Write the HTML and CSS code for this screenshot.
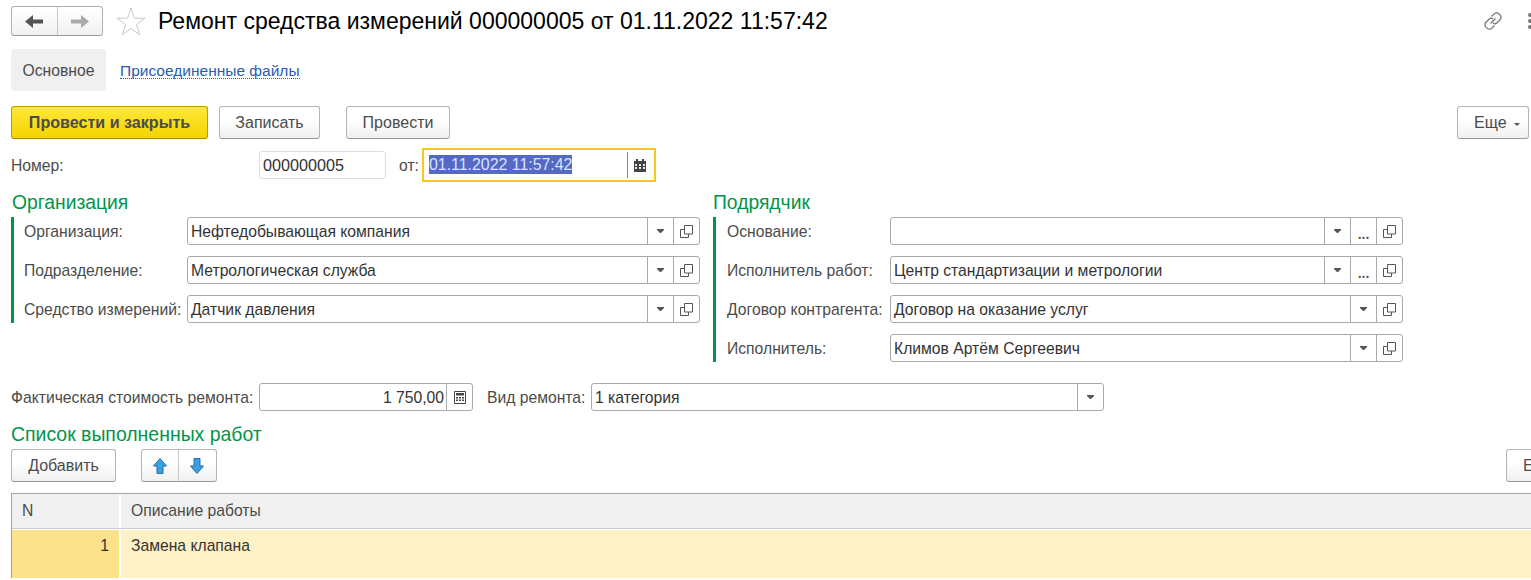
FILE: index.html
```html
<!DOCTYPE html>
<html lang="ru">
<head>
<meta charset="utf-8">
<title>Ремонт средства измерений</title>
<link rel="stylesheet" href="styles.css">
</head>
<body>
<svg class="defs" width="0" height="0">
  <defs>
    <symbol id="open" viewBox="1 0 14 14"><path d="M5.500 1.500h8v8.500h-8z M5.500 5.500H1.500v8h8V10" fill="none" stroke="#555" stroke-width="1"/></symbol>
    <symbol id="drop" viewBox="0 0 7 4"><path d="M0 0h7v1L4 4H3L0 1z" fill="#555"/></symbol>
  </defs>
</svg>
<div class="page">
  <header class="head">
    <div class="nav">
      <span class="nav-btn"><svg width="18" height="13" viewBox="0 0 18 13"><path d="M0 6.500l8-6.500v4.500h10v4H8V13z" fill="#555"/></svg></span>
      <span class="nav-btn"><svg width="18" height="13" viewBox="0 0 18 13"><path d="M18 6.500l-8-6.500v4.500H0v4h10V13z" fill="#aaa"/></svg></span>
    </div>
    <svg class="star" width="30" height="29" viewBox="0 0 30 29"><path d="M15 1l3.400 10.200h10.600l-8.600 6.300 3.300 10.300L15 21.500l-8.700 6.300 3.300-10.300L1 11.200h10.600z" fill="none" stroke="#c9c9c9"/></svg>
    <h1 class="title">Ремонт средства измерений 000000005 от 01.11.2022 11:57:42</h1>
    <svg class="link-ico" width="20" height="20" viewBox="0 0 20 20"><path d="M8.500 5.500l2.600-2.600a3.400 3.400 0 0 1 4.900 0l1 1a3.400 3.400 0 0 1 0 4.900l-3 3a3 3 0 0 1-4 .3 M11.500 14.500l-2.600 2.600a3.400 3.400 0 0 1-4.900 0l-1-1a3.400 3.400 0 0 1 0-4.900l3-3a3 3 0 0 1 4-.3 M7.500 12.500l5-5" fill="none" stroke="#777" stroke-width="1.300"/></svg>
    <span class="dots"><i></i><i></i><i></i></span>
  </header>

  <nav class="tabs">
    <span class="tab">Основное</span>
    <a class="tab-link">Присоединенные файлы</a>
  </nav>

  <div class="toolbar">
    <button class="btn primary">Провести и закрыть</button>
    <button class="btn save">Записать</button>
    <button class="btn post">Провести</button>
    <button class="btn more">Еще <svg class="more-arrow" width="6" height="3" viewBox="0 0 6 3"><path d="M0 0h6L3 3z" fill="#555"/></svg></button>
  </div>

  <div class="row-number">
    <label class="lbl lbl-num">Номер:</label>
    <div class="field num-field"><span class="val">000000005</span></div>
    <label class="lbl lbl-from">от:</label>
    <div class="field date-field">
      <span class="val"><span class="sel">01.11.2022 11:57:42</span></span>
      <span class="cell"><svg width="12" height="13" viewBox="0 0 12 13"><path d="M0 2h12v11H0z" fill="#444"/><path d="M2 0h2v3H2zM8 0h2v3H8z" fill="#444"/><path d="M1 5h2v2H1zM5 5h2v2H5zM9 5h2v2H9zM1 8h2v2H1zM5 8h2v2H5zM9 8h2v2H9z" fill="#e8e8e8"/></svg></span>
    </div>
  </div>

  <div class="groups">
    <section class="group g-left">
      <h2 class="group-title">Организация</h2>
      <div class="group-body">
        <div class="row"><label class="lbl rlbl">Организация:</label><div class="field wide"><span class="val">Нефтедобывающая компания</span><span class="cell"><svg width="7" height="4"><use href="#drop"/></svg></span><span class="cell"><svg width="14" height="14"><use href="#open"/></svg></span></div></div>
        <div class="row"><label class="lbl rlbl">Подразделение:</label><div class="field wide"><span class="val">Метрологическая служба</span><span class="cell"><svg width="7" height="4"><use href="#drop"/></svg></span><span class="cell"><svg width="14" height="14"><use href="#open"/></svg></span></div></div>
        <div class="row"><label class="lbl rlbl">Средство измерений:</label><div class="field wide"><span class="val">Датчик давления</span><span class="cell"><svg width="7" height="4"><use href="#drop"/></svg></span><span class="cell"><svg width="14" height="14"><use href="#open"/></svg></span></div></div>
      </div>
    </section>
    <section class="group g-right">
      <h2 class="group-title">Подрядчик</h2>
      <div class="group-body">
        <div class="row"><label class="lbl rlbl">Основание:</label><div class="field wide"><span class="val"></span><span class="cell"><svg width="7" height="4"><use href="#drop"/></svg></span><span class="cell ell">...</span><span class="cell"><svg width="14" height="14"><use href="#open"/></svg></span></div></div>
        <div class="row"><label class="lbl rlbl">Исполнитель работ:</label><div class="field wide"><span class="val">Центр стандартизации и метрологии</span><span class="cell"><svg width="7" height="4"><use href="#drop"/></svg></span><span class="cell ell">...</span><span class="cell"><svg width="14" height="14"><use href="#open"/></svg></span></div></div>
        <div class="row"><label class="lbl rlbl">Договор контрагента:</label><div class="field wide"><span class="val">Договор на оказание услуг</span><span class="cell"><svg width="7" height="4"><use href="#drop"/></svg></span><span class="cell"><svg width="14" height="14"><use href="#open"/></svg></span></div></div>
        <div class="row"><label class="lbl rlbl">Исполнитель:</label><div class="field wide"><span class="val">Климов Артём Сергеевич</span><span class="cell"><svg width="7" height="4"><use href="#drop"/></svg></span><span class="cell"><svg width="14" height="14"><use href="#open"/></svg></span></div></div>
      </div>
    </section>
  </div>

  <div class="row-cost">
    <label class="lbl lbl-num">Фактическая стоимость ремонта:</label>
    <div class="field cost-field"><span class="val right">1 750,00</span><span class="cell"><svg width="12" height="13" viewBox="0 0 12 13"><path d="M.5.500h11v12H.5z" fill="none" stroke="#444"/><path d="M2 2h8v2.500H2zM2 6h2v1.500H2zM5 6h2v1.500H5zM8 6h2v1.500H8zM2 8.500h2V10H2zM5 8.500h2V10H5zM8 8.500h2V10H8z" fill="#444"/></svg></span></div>
    <label class="lbl lbl-kind">Вид ремонта:</label>
    <div class="field kind-field"><span class="val">1 категория</span><span class="cell"><svg width="7" height="4"><use href="#drop"/></svg></span></div>
  </div>

  <h2 class="list-title">Список выполненных работ</h2>
  <div class="list-bar">
    <button class="btn add">Добавить</button>
    <div class="updown">
      <span class="ud"><svg width="14" height="16" viewBox="0 0 14 16"><path d="M7 .5l6.500 7.500H10v7.500H4V8H.5z" fill="#3aa0e0" stroke="#1f6fa8"/></svg></span>
      <span class="ud ud-down"><svg width="14" height="16" viewBox="0 0 14 16"><path d="M7 15.500l6.500-7.500H10V.5H4V8H.5z" fill="#3aa0e0" stroke="#1f6fa8"/></svg></span>
    </div>
    <button class="btn more clip">Еще <svg class="more-arrow" width="6" height="3" viewBox="0 0 6 3"><path d="M0 0h6L3 3z" fill="#555"/></svg></button>
  </div>

  <div class="table">
    <div class="tr thead"><div class="td c-n">N</div><div class="td c-d">Описание работы</div></div>
    <div class="tr tbody"><div class="td c-n cur">1</div><div class="td c-d">Замена клапана</div></div>
  </div>
</div>
</body>
</html>
```
FILE: styles.css
```css
* { box-sizing: border-box; }
html, body { margin: 0; padding: 0; height: 580px; overflow: hidden; background: #fff; }
body { font: 15.7px/16px "Liberation Sans", Arial, sans-serif; color: #4b4b4b; }
.defs { display: block; height: 0; }
.page { width: 1531px; height: 580px; overflow: hidden; padding-left: 11px; }

.head { display: flex; align-items: center; height: 36px; padding-top: 6px; width: 1540px; }
.nav { display: flex; width: 92px; height: 30px; border: 1px solid #b0b0b0; border-bottom-color: #999; border-radius: 3px; background: linear-gradient(#fff, #f1f1f1); flex: none; }
.nav-btn { flex: 1; display: flex; align-items: center; justify-content: center; }
.nav-btn + .nav-btn { border-left: 1px solid #c8c8c8; }
.star { margin-left: 13px; margin-top: 1px; flex: none; }
.title { margin: 0 0 0 12px; font-weight: 400; font-size: 23.03px; line-height: 30px; color: #000; white-space: nowrap; flex: none; }
.link-ico { margin-left: 655px; flex: none; }
.dots { display: flex; flex-direction: column; gap: 2px; margin-left: 25px; flex: none; }
.dots i { display: block; width: 4px; height: 4px; border-radius: 50%; background: #777; }

.tabs { display: flex; align-items: center; margin-top: 13px; height: 42px; }
.tab { width: 95px; height: 42px; line-height: 44px; text-align: center; background: #f0f0f0; border-radius: 3px; }
.tab-link { margin-left: 14px; color: #2a5db0; border-bottom: 1px dotted #2a5db0; line-height: 15px; font-size: 15.5px; margin-top: 1px; }

.toolbar { display: flex; margin-top: 15px; width: 1518px; height: 33px; }
.btn { height: 33px; padding: 0; border: 1px solid #b5b5b5; border-bottom-color: #9a9a9a; border-radius: 3px; background: linear-gradient(#fff 40%, #f0f0f0); font: 16px "Liberation Sans", Arial, sans-serif; color: #4b4b4b; flex: none; }
.primary { width: 197px; font-weight: 700; font-size: 16.1px; background: linear-gradient(#ffe83a, #f5d400); border-color: #b8a000; border-bottom-color: #a08c00; }
.save { width: 101px; margin-left: 11px; }
.post { width: 104px; margin-left: 26px; }
.more { width: 72px; margin-left: auto; text-align: left; padding-left: 16px; }
.more-arrow { margin-left: 3px; vertical-align: 2px; }

.field { display: flex; height: 28px; border: 1px solid #a9a9a9; border-radius: 3px; background: #fff; flex: none; }
.val { flex: 1; min-width: 0; padding-left: 3px; line-height: 28px; color: #333; white-space: nowrap; }
.val.right { text-align: right; padding-right: 2px; }
.cell { flex: none; width: 26px; display: flex; align-items: center; justify-content: center; border-left: 1px solid #a9a9a9; }
.ell { font-weight: 700; font-size: 14px; align-items: flex-end; padding-bottom: 4px; line-height: 12px; color: #555; }
.lbl { white-space: nowrap; color: #4b4b4b; line-height: 16px; padding-top: 2px; }

.row-number { display: flex; align-items: center; margin-top: 9px; height: 34px; }
.lbl-num { width: 248px; }
.num-field { width: 127px; border-color: #ddd; }
.num-field .val { padding-left: 3px; font-size: 16.2px; line-height: 26px; }
.lbl-from { margin-left: 13px; width: 23px; }
.date-field { width: 234px; height: 34px; border: 2px solid #f6c81e; border-radius: 0; padding: 2px 0; }
.date-field .val { padding-left: 5px; line-height: 26px; font-size: 15.9px; }
.sel { background: #5468c4; color: #d8e4ff; display: inline-block; line-height: 19px; }
.date-field .cell { width: 27px; padding-right: 3px; border-left-color: #888; }

.groups { display: flex; margin-top: 9px; }
.group { flex: none; }
.g-left { width: 702px; }
.group-title, .list-title { margin: 0; font-weight: 400; font-size: 19.3px; line-height: 22px; color: #00964a; }
.group-title { margin-left: 1px; height: 26px; padding-top: 1px; }
.group-body { display: flex; flex-direction: column; gap: 11px; border-left: 3px solid #00964f; padding-left: 10px; }
.g-right .group-body { padding-left: 11px; }
.g-right .group-title { margin-left: 0; }
.group .row { display: flex; align-items: center; height: 28px; }
.rlbl { width: 163px; }
.wide { width: 513px; }

.row-cost { display: flex; align-items: center; height: 28px; margin-top: 21px; }
.cost-field { width: 214px; }
.lbl-kind { margin-left: 14px; width: 104px; }
.kind-field { width: 513px; }

.list-title { margin-top: 12px; height: 26px; font-size: 19.45px; }
.list-bar { display: flex; width: 1567px; height: 33px; }
.add { width: 105px; }
.updown { display: flex; margin-left: 25px; width: 76px; height: 33px; border: 1px solid #b5b5b5; border-bottom-color: #9a9a9a; border-radius: 3px; background: linear-gradient(#fff 40%, #f0f0f0); }
.ud { flex: 1; display: flex; align-items: center; justify-content: center; }
.ud + .ud { border-left: 1px solid #c8c8c8; }
.ud-down { padding-right: 1px; }

.table { margin-top: 11px; width: 1600px; border-top: 1px solid #a5a5a5; border-left: 1px solid #a5a5a5; }
.tr { display: flex; }
.thead { height: 35px; background: #f0f0f0; border-bottom: 1px solid #ccc; margin-bottom: 1px; }
.thead .td { line-height: 34px; }
.tbody { height: 48px; background: #fdf1c5; }
.c-n { width: 107px; flex: none; padding: 0 10px; }
.c-d { flex: 1; padding-left: 10px; border-left: 2px solid #fff; }
.tbody .td { padding-top: 8px; color: #333; }
.cur { background: #fde28c; text-align: right; }
```
